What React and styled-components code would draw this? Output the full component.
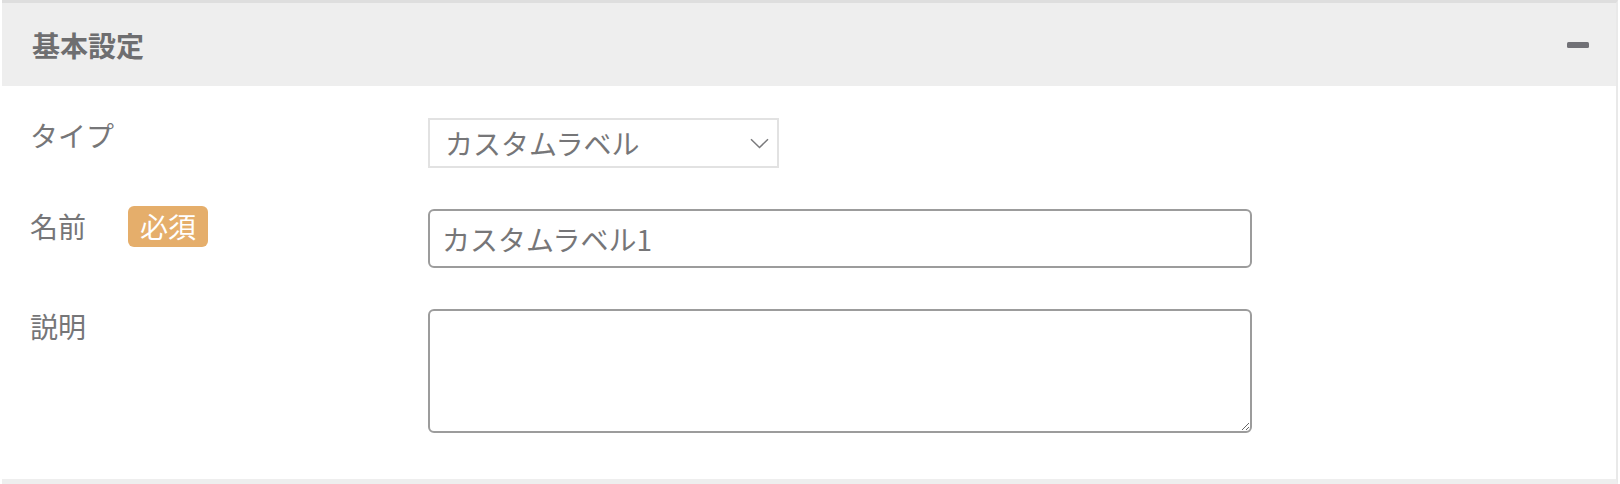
import React from 'react';
import styled, { createGlobalStyle } from 'styled-components';

const GlobalStyle = createGlobalStyle`
	html, body {
		margin: 0;
		padding: 0;
		background: #ffffff;
	}
	body {
		font-family: 'Noto Sans CJK JP', 'Noto Sans', sans-serif;
	}
`;

const Panel = styled.section`
	box-sizing: border-box;
	width: 1616px;
	margin-left: 2px;
	border-top: 3px solid #dedede;
	border-right: 2px solid #e9e9e9;
	border-bottom: 5px solid #eeeeee;
	background: #ffffff;
`;

const PanelHeader = styled.header`
	display: flex;
	align-items: center;
	justify-content: space-between;
	height: 83px;
	padding: 0 27px 0 30px;
	background: #eeeeee;
	.panelTitle {
		font-size: 28px;
		font-weight: bold;
		color: #6e6e70;
		line-height: 1;
	}
`;

const CollapseButton = styled.button`
	display: flex;
	align-items: center;
	justify-content: center;
	padding: 0;
	border: none;
	background: transparent;
	cursor: pointer;
	span {
		display: block;
		width: 22px;
		height: 6px;
		border-radius: 1.5px;
		background: #717176;
	}
`;

const PanelBody = styled.div`
	display: flex;
	flex-direction: column;
	gap: 41px;
	padding: 32px 0 46px 28px;
`;

const Row = styled.div`
	display: flex;
	align-items: flex-start;
`;

const Label = styled.label`
	display: flex;
	align-items: center;
	width: 398px;
	height: 34px;
	font-size: 28px;
	line-height: 34px;
	color: #767678;
	flex-shrink: 0;
`;

const Badge = styled.span`
	display: inline-block;
	height: 41px;
	margin-left: 42px;
	padding: 0 12px;
	border-radius: 6px;
	background: #e5ae6b;
	color: #ffffff;
	font-size: 28px;
	line-height: 41px;
`;

const SelectWrap = styled.div`
	display: flex;
	align-items: center;
	box-sizing: border-box;
	width: 351px;
	height: 50px;
	padding-right: 8px;
	border: 2px solid #e2e2e2;
	background: #ffffff;
	svg {
		flex-shrink: 0;
	}
`;

const Select = styled.select`
	flex: 1;
	height: 100%;
	padding: 0 0 0 15px;
	border: none;
	outline: none;
	background: transparent;
	appearance: none;
	font-family: inherit;
	font-size: 28px;
	color: #767678;
`;

const fieldBase = `
	box-sizing: border-box;
	width: 824px;
	border: 2px solid #9c9c9c;
	border-radius: 6px;
	background: #ffffff;
	font-family: inherit;
	font-size: 28px;
	color: #767678;
	outline: none;
`;

const TextInput = styled.input`
	${fieldBase}
	height: 59px;
	padding: 0 12px;
`;

const TextArea = styled.textarea`
	${fieldBase}
	display: block;
	height: 124px;
	padding: 10px 12px;
	resize: vertical;
`;

function Chevron() {
	return (
		<svg width="19" height="11" viewBox="0 0 19 11" fill="none">
			<path d="M1 1.2 L9.5 9.5 L18 1.2" stroke="#7a7a7c" strokeWidth="1.5" />
		</svg>
	);
}

export default function App() {
	return (
		<>
			<GlobalStyle />
			<Panel>
				<PanelHeader>
					<div className="panelTitle">基本設定</div>
					<CollapseButton aria-label="collapse">
						<span />
					</CollapseButton>
				</PanelHeader>
				<PanelBody>
					<Row>
						<Label>タイプ</Label>
						<SelectWrap>
							<Select defaultValue="custom">
								<option value="custom">カスタムラベル</option>
							</Select>
							<Chevron />
						</SelectWrap>
					</Row>
					<Row>
						<Label>
							名前
							<Badge>必須</Badge>
						</Label>
						<TextInput defaultValue="カスタムラベル1" />
					</Row>
					<Row>
						<Label>説明</Label>
						<TextArea />
					</Row>
				</PanelBody>
			</Panel>
		</>
	);
}
